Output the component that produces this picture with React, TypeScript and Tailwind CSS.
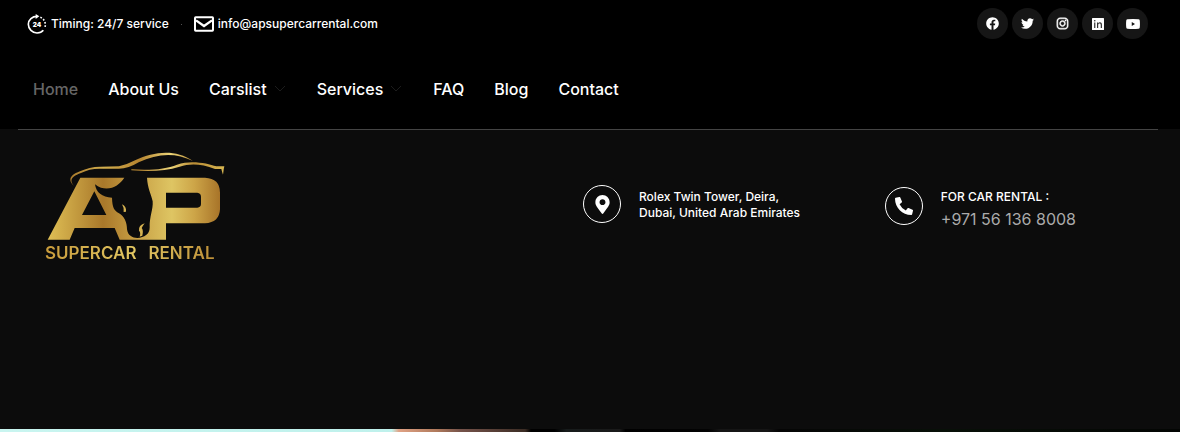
import React from "react";
import { FaFacebook, FaInstagram, FaMapMarkerAlt, FaPhoneAlt, FaTwitter } from "react-icons/fa";

const socials = [
  { label: "Facebook", icon: <FaFacebook size={13} /> },
  { label: "Twitter", icon: <FaTwitter size={13} /> },
  { label: "Instagram", icon: <InstagramIcon /> },
  { label: "LinkedIn", icon: <LinkedInIcon /> },
  { label: "YouTube", icon: <YouTubeIcon /> },
];

const links = [
  { label: "Home", active: true },
  { label: "About Us" },
  { label: "Carslist", menu: true },
  { label: "Services", menu: true },
  { label: "FAQ" },
  { label: "Blog" },
  { label: "Contact" },
];

function InstagramIcon() {
  return <FaInstagram size={13} strokeWidth={20} stroke="currentColor" />;
}

function LinkedInIcon() {
  return (
    <svg width="12" height="12" viewBox="0 0 24 24" aria-hidden="true">
      <path d="M1 0h22a1 1 0 0 1 1 1v22a1 1 0 0 1-1 1H1a1 1 0 0 1-1-1V1a1 1 0 0 1 1-1z" fill="#fff" />
      <circle cx="5.5" cy="5.5" r="1.6" fill="#333" />
      <path d="M4.300 9h2.400v11H4.300zM10 9h2.400v1.500c.8-1.200 2-1.800 3.500-1.800 3 0 4 2 4 4.800V20h-2.400v-6c0-2-.6-3.100-2.400-3.100s-2.700 1.300-2.700 3.100V20H10z" fill="#333" />
    </svg>
  );
}

function YouTubeIcon() {
  return (
    <svg width="14" height="10" viewBox="0 0 28 20" aria-hidden="true">
      <path d="M3 0.500Q14-.5 25 .5q2 0 2.500 2.500.8 7 0 14-.5 2.500-2.500 2.500-11 1-22 0-2 0-2.500-2.500-.8-7 0-14Q1 .5 3 .5zM11.500 6.200v7.600l6.500-3.800z" fill="#fff" fillRule="evenodd" />
    </svg>
  );
}

function ClockIcon() {
  return (
    <svg width="20" height="20" viewBox="0 0 60 60" fill="none" aria-hidden="true">
      <path d="M30 7C16 7 4 17 4 31s12 26 26 26c9 0 15-3 19-8" stroke="#fff" strokeWidth="5" />
      <path d="M26 0l11 7-11 8z" fill="#fff" />
      <path d="M40 10c13 5 18 19 13 33" stroke="#fff" strokeWidth="5" strokeDasharray="5 5" />
      <text x="30" y="38" textAnchor="middle" fontFamily="Inter, sans-serif" fontWeight="900" fontSize="19" fill="#fff">24</text>
    </svg>
  );
}

function MailIcon() {
  return (
    <svg width="20" height="16" viewBox="0 0 60 48" fill="none" stroke="#fff" aria-hidden="true">
      <rect x="3" y="4" width="54" height="40" rx="2" strokeWidth="6" />
      <path d="M6 13l24 17 24-17" strokeWidth="7" />
    </svg>
  );
}

function Emblem() {
  return (
    <svg width="180" height="90" viewBox="45 20 540 270" fill="none" aria-hidden="true">
      <defs>
        <linearGradient id="gold" gradientUnits="userSpaceOnUse" x1="54" y1="0" x2="570" y2="0">
          <stop offset="0" stopColor="#dfbf55" />
          <stop offset=".32" stopColor="#a9782a" />
          <stop offset=".5" stopColor="#c69d42" />
          <stop offset=".72" stopColor="#dec563" />
          <stop offset=".85" stopColor="#cda548" />
          <stop offset="1" stopColor="#a87429" />
        </linearGradient>
        <linearGradient id="roof" gradientUnits="userSpaceOnUse" x1="118" y1="0" x2="585" y2="0">
          <stop offset="0" stopColor="#a8782a" />
          <stop offset=".22" stopColor="#d4b04f" />
          <stop offset=".45" stopColor="#b58430" />
          <stop offset=".65" stopColor="#ecd477" />
          <stop offset=".8" stopColor="#b98c35" />
          <stop offset="1" stopColor="#d9b852" />
        </linearGradient>
      </defs>
      <path
        d="M132 122C112 104 120 89 150 78Q178 64 210 64L267 63Q290 58 317 44C370 20 435 10 489 47C436 20 381 24 326 51Q294 71 264 70L208 70Q178 70 153 83C126 93 116 104 132 122z"
        fill="url(#roof)"
      />
      <path
        d="M304 72C365 76 408 71 441 58C486 43 532 55 559 63L583 63Q581 70 579 88Q576 80 574 71L555 71C515 56 482 54 449 64C407 77 363 79 304 75z"
        fill="url(#roof)"
      />
      <path
        fillRule="evenodd"
        fill="url(#gold)"
        d="M151 97H283C268 119 244 136 213 127Q203 124 195 117C198 141 216 156 246 157C247 187 252 195 267 204C283 213 291 231 291 252C293 270 307 278 322 278C343 276 359 266 359 247C358 214 370 192 368 168C362 142 353 130 351 97H525Q570 99 570 142V192Q568 232 525 234H408V283H269L254 248H134L119 283H53zM193 138L156 209H229zM408 142V187H502Q513 186 513 176V154Q513 143 502 142z"
      />
      <path d="M276 177q14 7 12 22l-7 1q2-12-5-23z" fill="#d5b250" />
      <path d="M344 234Q325 240 327 256Q333 261 329 274L337 271Q341 254 335 248Q339 241 344 234z" fill="#d5b250" />
    </svg>
  );
}

export default function App() {
  return (
    <div className="bg-[#0c0c0c] font-['Inter',sans-serif] text-white">
      <header className="bg-black">
        <div className="flex items-start justify-between pt-2 pr-8 pl-[27px]">
          <div className="flex h-8 items-center text-xs font-medium">
            <span className="flex items-center gap-1">
              <ClockIcon />
              Timing: 24/7 service
            </span>
            <span className="mx-3 size-px bg-neutral-600" />
            <a href="mailto:info@apsupercarrental.com" className="flex items-center gap-1">
              <MailIcon />
              info@apsupercarrental.com
            </a>
          </div>
          <div className="flex gap-1">
            {socials.map((s) => (
              <a key={s.label} href="#" aria-label={s.label} className="flex size-[31px] items-center justify-center rounded-full bg-[#161616]">
                {s.icon}
              </a>
            ))}
          </div>
        </div>
        <nav className="flex h-[89px] items-center gap-[30px] px-[33px] pt-2 text-base font-medium">
          {links.map((l) => (
            <a key={l.label} href="#" className={l.active ? "text-[#666666]" : "flex items-center text-white"}>
              {l.label}
              {l.menu && (
                <svg className="mr-0.5 ml-2" width="10" height="6" viewBox="0 0 10 6" fill="none" stroke="#1c1c1c" aria-hidden="true">
                  <path d="M0 0l5 5 5-5" />
                </svg>
              )}
            </a>
          ))}
        </nav>
      </header>
      <section className="pr-[22px] pl-[18px]">
        <div className="flex h-[300px] items-start border-t border-[#444444] pl-[27px]">
          <a href="#" className="flex flex-col pt-[22px]">
            <Emblem />
            <span className="flex gap-3 bg-gradient-to-r from-[#c99c3b] via-[#e2c762] to-[#b98932] bg-clip-text text-[17px] leading-[22px] font-semibold text-transparent">
              <span>SUPERCAR</span>
              <span>RENTAL</span>
            </span>
          </a>
          <div className="ml-auto flex w-[575px] justify-between pt-[55px] pr-[82px]">
            <div className="flex items-start gap-[18px]">
              <span className="flex size-[38px] items-center justify-center rounded-full border border-white">
                <FaMapMarkerAlt size={19} />
              </span>
              <address className="pt-1 text-xs leading-4 font-medium not-italic">
                Rolex Twin Tower, Deira,
                <br />
                Dubai, United Arab Emirates
              </address>
            </div>
            <div className="flex items-start gap-[18px]">
              <span className="mt-0.5 flex size-[38px] items-center justify-center rounded-full border border-white">
                <FaPhoneAlt size={18} />
              </span>
              <div className="pt-1">
                <p className="text-xs leading-4 font-medium">FOR CAR RENTAL :</p>
                <a href="tel:+971561368008" className="block text-base leading-7 text-[#aaaaaa]">
                  +971 56 136 8008
                </a>
              </div>
            </div>
          </div>
        </div>
      </section>
      <div className="h-[3px] bg-[linear-gradient(90deg,#c9f5f0_0%,#bff1ec_33.2%,#e0a285_33.8%,#b07a5c_37%,#76534a_39%,#3b2c24_44.500%,#000_45%,#000_47%,#171b1b_48%,#1a1a1a_52.500%,#000_53%,#030303_60%,#151515_61%,#151515_65%,#050505_66%,#081008_80%,#030503_100%)]" />
    </div>
  );
}
